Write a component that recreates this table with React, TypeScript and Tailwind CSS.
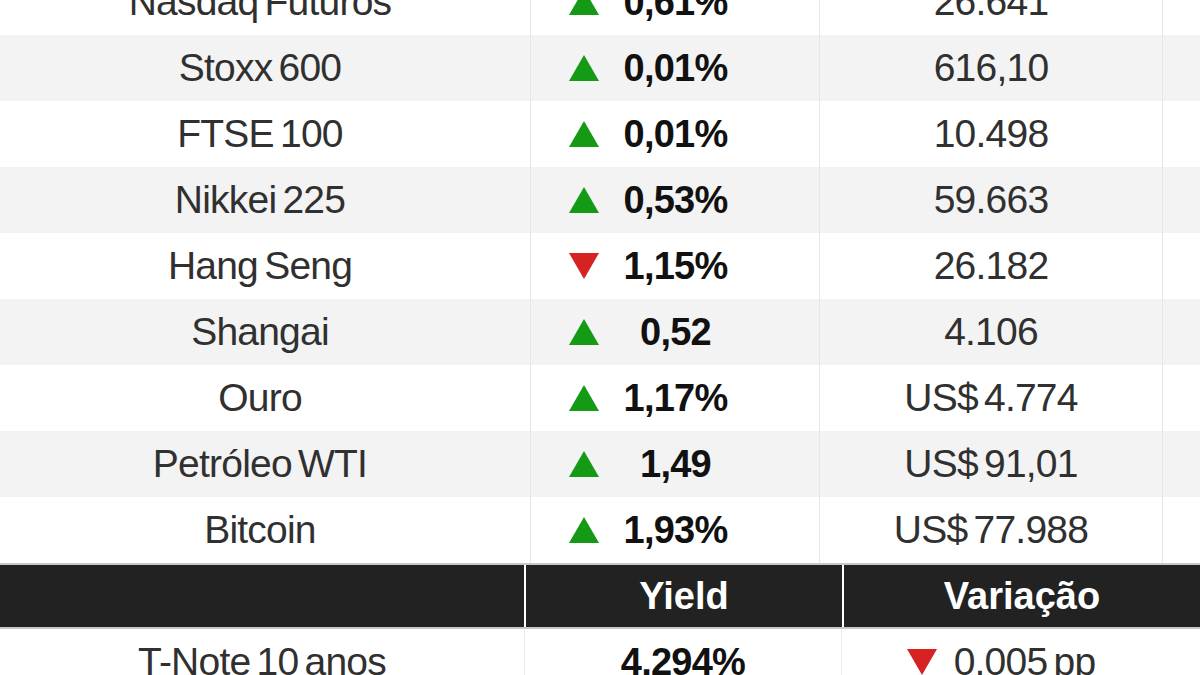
import React from "react";

type Row = { name: string; up: boolean; pct: string; val: string };

const rows: Row[] = [
  { name: "Nasdaq Futuros", up: true, pct: "0,61%", val: "26.641" },
  { name: "Stoxx 600", up: true, pct: "0,01%", val: "616,10" },
  { name: "FTSE 100", up: true, pct: "0,01%", val: "10.498" },
  { name: "Nikkei 225", up: true, pct: "0,53%", val: "59.663" },
  { name: "Hang Seng", up: false, pct: "1,15%", val: "26.182" },
  { name: "Shangai", up: true, pct: "0,52", val: "4.106" },
  { name: "Ouro", up: true, pct: "1,17%", val: "US$ 4.774" },
  { name: "Petróleo WTI", up: true, pct: "1,49", val: "US$ 91,01" },
  { name: "Bitcoin", up: true, pct: "1,93%", val: "US$ 77.988" },
];

function Tri({ up }: { up: boolean }) {
  return (
    <svg width="30" height="26" viewBox="0 0 30 26" className="block">
      {up ? (
        <polygon points="15,0 30,26 0,26" fill="#149a14" />
      ) : (
        <polygon points="0,0 30,0 15,26" fill="#d62222" />
      )}
    </svg>
  );
}

const reg = "text-[39px] tracking-[-0.02em] [word-spacing:-0.1em] text-[#303030]";
const bold = "text-[38px] tracking-[-0.02em] font-bold text-[#111]";

export default function App() {
  return (
    <div
      className="w-[1200px] h-[675px] overflow-hidden bg-white"
      style={{ fontFamily: '"Liberation Sans", Arial, sans-serif' }}
    >
      <div className="-mt-[31px]">
        {rows.map((r, i) => (
          <div
            key={r.name}
            className={`grid grid-cols-[531px_289px_343px_37px] h-[66px] ${
              i % 2 === 1 ? "bg-[#f3f3f3]" : "bg-white"
            }`}
          >
            <div className={`flex items-center justify-center border-r border-[#e6e6e6] pr-[10px] ${reg}`}>
              {r.name}
            </div>
            <div className="grid grid-cols-[68px_1fr_67px] border-r border-[#e6e6e6]">
              <div className="flex items-center justify-end">
                <Tri up={r.up} />
              </div>
              <div className={`flex items-center justify-center ${bold}`}>{r.pct}</div>
              <div />
            </div>
            <div className={`flex items-center justify-center border-r border-[#e6e6e6] ${reg}`}>
              {r.val}
            </div>
            <div />
          </div>
        ))}

        <div className="h-[66px] border-y-2 border-[#c8c8c8] bg-white flex gap-[2px]">
          <div className="w-[524px] bg-[#222]" />
          <div className="w-[316px] bg-[#222] flex items-center justify-center text-[38px] font-bold text-white">
            Yield
          </div>
          <div className="flex-1 bg-[#222] flex items-center justify-center text-[38px] font-bold text-white">
            Variação
          </div>
        </div>

        <div className="grid grid-cols-[525px_317px_318px_40px] h-[66px] bg-white">
          <div className={`flex items-center justify-center border-r border-[#ececec] ${reg}`}>
            T-Note 10 anos
          </div>
          <div className={`flex items-center justify-center border-r border-[#ececec] ${bold}`}>
            4,294%
          </div>
          <div className={`flex items-center justify-center gap-[17px] ${reg}`}>
            <Tri up={false} />
            <span>0,005 pp</span>
          </div>
          <div />
        </div>
      </div>
    </div>
  );
}
